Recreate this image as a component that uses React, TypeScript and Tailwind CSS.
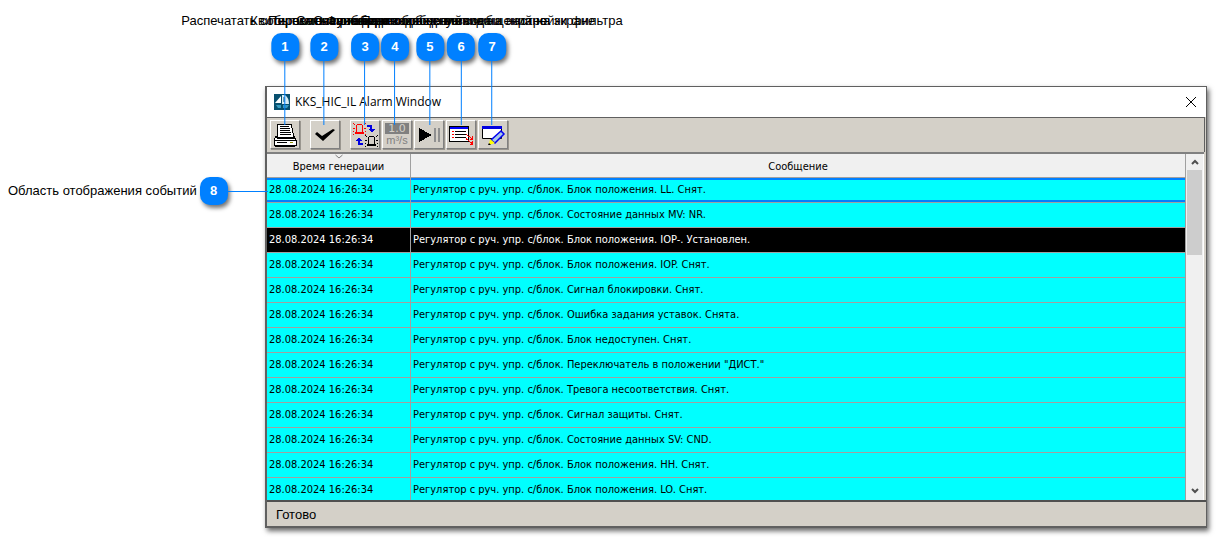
import { ReactNode } from "react";

const callouts = [
  { id: 1, left: "left-[285px]", text: "Распечатать события на принтере" },
  { id: 2, left: "left-[324px]", text: "Квитировать сообщения" },
  { id: 3, left: "left-[365px]", text: "Переключение вида сообщений" },
  { id: 4, left: "left-[395px]", text: "Смена отображения ед. величин" },
  { id: 5, left: "left-[430px]", text: "Остановка и возобновление на экране" },
  { id: 6, left: "left-[461px]", text: "Функция отображения сообщений на экране" },
  { id: 7, left: "left-[492px]", text: "Переход к окну ввода и настройки фильтра" },
];

const messages = [
  "Блок положения. LL. Снят.",
  "Состояние данных MV: NR.",
  "Блок положения. IOP-. Установлен.",
  "Блок положения. IOP. Снят.",
  "Сигнал блокировки. Снят.",
  "Ошибка задания уставок. Снята.",
  "Блок недоступен. Снят.",
  'Переключатель в положении "ДИСТ."',
  "Тревога несоответствия. Снят.",
  "Сигнал защиты. Снят.",
  "Состояние данных SV: CND.",
  "Блок положения. HH. Снят.",
  "Блок положения. LO. Снят.",
];

const Badge = ({ children }: { children: ReactNode }) => (
  <span className="flex h-7 w-7 shrink-0 items-center justify-center rounded-[10px] bg-[#0080ff] text-[13px] font-bold text-white shadow-[2px_3px_4px_rgba(0,0,0,0.55)]">
    {children}
  </span>
);

const ToolButton = ({ label, children }: { label: string; children: ReactNode }) => (
  <button
    type="button"
    aria-label={label}
    className="flex h-[29px] w-[30px] items-center justify-center border border-t-white border-l-white border-r-[#808080] border-b-[#808080] bg-[#d4d0c8] shadow-[1px_1px_0_#9a968f]"
  >
    {children}
  </button>
);

const PrinterIcon = () => (
  <svg width="26" height="26" viewBox="0 0 26 26" shapeRendering="crispEdges">
    <path d="M6 2h13l3 13H5z" fill="#fff" stroke="#000" />
    <path d="M8 4.5h9M8 6.5h10M8 8.5h10M8 10.5h11M8 12.5h11" stroke="#000" />
    <path d="M4 14l-2 4v5h22v-5l-2-4v2H5z" fill="#fff" stroke="#000" />
    <path d="M2 18.5h22M5 20.5h10M3 24.5h20" stroke="#000" />
    <path d="M18 20h3v1h-3z" fill="#909000" />
  </svg>
);

const CheckIcon = () => (
  <svg width="22" height="22" viewBox="0 0 22 22">
    <path d="M1 10l2-2 5 4 11-7 2 1L9 17z" fill="#000" />
  </svg>
);

const Lamp = ({ x, y, color }: { x: number; y: number; color: string }) => (
  <g transform={`translate(${x} ${y})`} fill={color}>
    <path d="M4 1h5v1H4zM3 2h1v7H3zM9 2h1v7H9zM2 9h9v2H2z" />
    <path d="M0 0h1v1H0zM1 1h1v1H1zM12 0h1v1h-1zM11 1h1v1h-1zM0 5h2v1H0zM11 5h2v1h-2zM0 8h1v1H0zM12 8h1v1h-1zM0 11h1v1H0zM12 11h1v1h-1z" />
  </g>
);

const LampSwapIcon = () => (
  <svg width="26" height="26" viewBox="0 0 26 26" shapeRendering="crispEdges">
    <Lamp x={1} y={1} color="#f00" />
    <Lamp x={13} y={13} color="#000" />
    <path d="M15 4h4v4" stroke="#0000e0" strokeWidth="2" fill="none" />
    <path d="M16 7h7l-3 4z" fill="#0000e0" />
    <path d="M11 22H7v-4" stroke="#0000e0" strokeWidth="2" fill="none" />
    <path d="M3 19h7l-3-4z" fill="#0000e0" />
  </svg>
);

const UnitsIcon = () => (
  <span className="flex flex-col items-center font-['DejaVu_Sans',sans-serif] text-[#808080]">
    <span className="w-6 bg-[#808080] text-[11px] leading-[11px] text-[#d4d0c8]">1.0</span>
    <span className="font-['Liberation_Sans',sans-serif] text-[11px] leading-[12px]">m³/s</span>
  </span>
);

const PlayPauseIcon = () => (
  <svg width="26" height="22" viewBox="0 0 26 22" shapeRendering="crispEdges">
    <path d="M3 4v14l13-7z" fill="#000" />
    <path d="M18 4h2v14h-2zM22 4h2v14h-2z" fill="#909090" />
  </svg>
);

const ListIcon = () => (
  <svg width="26" height="24" viewBox="0 0 26 24" shapeRendering="crispEdges">
    <path d="M1.5 3.5h19v15h-19z" fill="#fff" stroke="#000" />
    <path d="M2 4h18v2H2z" fill="#00f" />
    <path d="M4 8.5h2M4 11.5h2M4 14.5h2" stroke="#f00" />
    <path d="M7 8.5h11M7 11.5h11M7 14.5h11" stroke="#000" />
    <path d="M18 11.5l6 4M18 15.5l6 5M24.5 13v3h-3M24.5 18v3h-3" stroke="#f00" fill="none" />
  </svg>
);

const EditIcon = () => (
  <svg width="26" height="24" viewBox="0 0 26 24">
    <path d="M2.5 4.5h19v11h-19z" fill="#fff" stroke="#000" />
    <path d="M2 3h20v3H2z" fill="#0000e0" />
    <path d="M21 8l3 3-9 9-4-3z" fill="#a8c8e8" stroke="#0000f0" strokeWidth="1.5" />
    <path d="M10 16l5 4-6 2z" fill="#ff0" />
    <path d="M9 20l2 2H8z" fill="#000" />
  </svg>
);

const tools = [
  { label: "Печать", icon: <PrinterIcon />, gap: "mr-[10px]" },
  { label: "Квитировать", icon: <CheckIcon />, gap: "mr-[10px]" },
  { label: "Переключить сигнализацию", icon: <LampSwapIcon />, gap: "mr-[2px]" },
  { label: "Единицы измерения", icon: <UnitsIcon />, gap: "mr-[2px]" },
  { label: "Пауза", icon: <PlayPauseIcon />, gap: "mr-[2px]" },
  { label: "Список", icon: <ListIcon />, gap: "mr-[2px]" },
  { label: "Фильтр", icon: <EditIcon />, gap: "" },
];

const TitleBar = () => (
  <header className="flex h-[30px] items-center bg-white pl-[7px]">
    <svg width="16" height="16" viewBox="0 0 16 16">
      <path d="M0 0h16v16H0z" fill="#08506f" />
      <path d="M1 9l6-7v7z" fill="#fff" />
      <path d="M8 1h3q4 3 4 9H8z" fill="#d8eef6" />
      <path d="M10 3v5" stroke="#08506f" />
      <path d="M2 11h5v3H4zM9 11h6l-2 3H9z" fill="#3a9cc0" />
    </svg>
    <h1 className="ml-[5px] flex-1 font-['Open_Sans','Noto_Sans',sans-serif] text-xs text-black">KKS_HIC_IL Alarm Window</h1>
    <button type="button" aria-label="Закрыть" className="mr-[9px] p-0">
      <svg width="12" height="12" viewBox="0 0 12 12">
        <path d="M1 1l10 10M11 1L1 11" stroke="#000" />
      </svg>
    </button>
  </header>
);

const ScrollBar = () => (
  <div className="flex w-[19px] shrink-0 flex-col border-x border-l-[#a0a0a0] border-r-white bg-[#f0f0f0] px-px">
    <button type="button" aria-label="Вверх" className="flex h-4 items-center justify-center">
      <svg width="8" height="6" viewBox="0 0 8 6"><path d="M1 5l3-3 3 3" stroke="#505050" strokeWidth="2" fill="none" /></svg>
    </button>
    <div className="h-[85px] bg-[#cdcdcd]" />
    <button type="button" aria-label="Вниз" className="mt-auto flex h-[19px] items-center justify-center">
      <svg width="8" height="6" viewBox="0 0 8 6"><path d="M1 1l3 3 3-3" stroke="#505050" strokeWidth="2" fill="none" /></svg>
    </button>
  </div>
);

const rowStyle = (i: number) => {
  if (i === 0) return "bg-[#00ffff] text-black [&>td]:shadow-[inset_0_2px_0_#0080ff,inset_0_-2px_0_#0080ff]";
  if (i === 2) return "bg-black text-white";
  return "bg-[#00ffff] text-black";
};

const EventTable = () => (
  <table className="w-full table-fixed border-separate border-spacing-0 font-['DejaVu_Sans_Condensed','DejaVu_Sans',sans-serif] text-[11px] leading-4">
    <colgroup>
      <col className="w-[144px]" />
      <col />
    </colgroup>
    <thead>
      <tr className="h-6 bg-[#f0f0f0] text-black">
        <th className="relative border-r border-b border-[#a0a0a0] p-0 pt-[3px] font-normal">
          <svg className="absolute top-0 left-1/2 -translate-x-1/2" width="9" height="5" viewBox="0 0 9 5">
            <path d="M1 1l3.5 3L8 1" stroke="#808080" fill="none" />
          </svg>
          Время генерации
        </th>
        <th className="border-b border-[#a0a0a0] p-0 pt-[3px] font-normal">Сообщение</th>
      </tr>
    </thead>
    <tbody>
      {messages.map((message, i) => (
        <tr key={message} className={`h-[25px] ${rowStyle(i)}`}>
          <td className="border-r border-b border-[#a0a0a0] p-0 pl-0.5 whitespace-nowrap">28.08.2024 16:26:34</td>
          <td className="border-b border-[#a0a0a0] p-0 pl-0.5 whitespace-nowrap">Регулятор с руч. упр. с/блок. {message}</td>
        </tr>
      ))}
    </tbody>
  </table>
);

const AlarmWindow = () => (
  <main className="border border-b-2 border-l-2 border-[#606060] bg-[#d4d0c8] shadow-[2px_3px_5px_rgba(0,0,0,0.6)]">
    <TitleBar />
    <div className="mr-px flex h-[35px] items-start border-t border-r border-[#606060] pt-[2px] pl-[3px]">
      {tools.map((tool) => (
        <div key={tool.label} className={tool.gap}>
          <ToolButton label={tool.label}>{tool.icon}</ToolButton>
        </div>
      ))}
    </div>
    <div className="mr-0.5 flex h-[348px] overflow-hidden border-t-2 border-[#808080]">
      <div className="min-w-0 flex-1">
        <EventTable />
      </div>
      <ScrollBar />
    </div>
    <footer className="flex h-[26px] items-center border-t-2 border-[#505050] pt-px pl-[9px] text-[13px] text-black">
      Готово
    </footer>
  </main>
);

export default function App() {
  return (
    <div className="relative min-h-screen overflow-hidden bg-white pt-[86px] pr-[9px] pb-2 pl-[265px] font-['Liberation_Sans',sans-serif]">
      <AlarmWindow />
      {callouts.map((c) => (
        <div key={c.id} className={`absolute top-[13px] flex -translate-x-1/2 flex-col items-center ${c.left}`}>
          <span className="mb-1 text-[13px] leading-4 whitespace-nowrap text-black">{c.text}</span>
          <Badge>{c.id}</Badge>
          <span className="h-16 w-px bg-[#0080ff]" />
        </div>
      ))}
      <div className="absolute top-[177px] left-2 flex items-center gap-[3px]">
        <span className="text-[13px] whitespace-nowrap text-black">Область отображения событий</span>
        <div className="flex items-center">
          <Badge>8</Badge>
          <span className="h-px w-10 bg-[#0080ff]" />
        </div>
      </div>
    </div>
  );
}
